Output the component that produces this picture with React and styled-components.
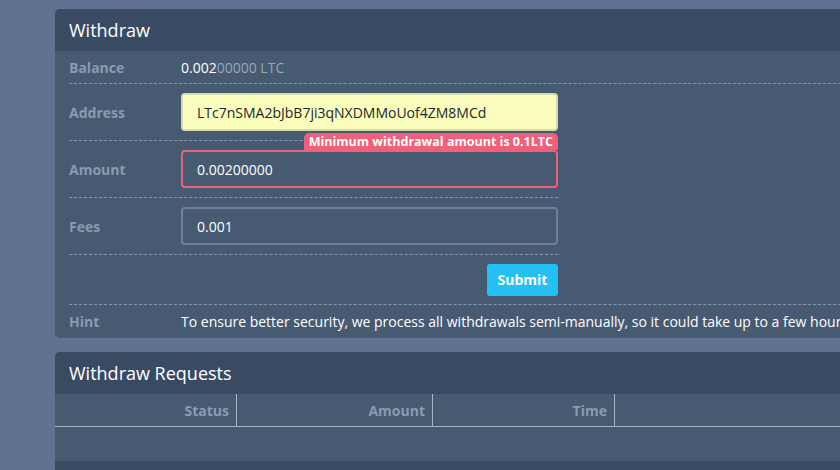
import styled, { createGlobalStyle } from "styled-components"

const Global = createGlobalStyle`
  html, body {
    margin: 0;
    background: #5f7390;
    overflow: hidden;
  }
  body {
    font-family: "Open Sans", "Liberation Sans", sans-serif;
  }
`

const Page = styled.div`
  padding: 9px 0 0 55px;
  display: flex;
  flex-direction: column;
  gap: 14px;
`

const Panel = styled.section`
  width: 900px;
  background: #465a72;
  border-radius: 5px 0 0 5px;
  overflow: hidden;
`

const PanelHead = styled.header`
  height: 42px;
  display: flex;
  align-items: center;
  padding-left: 14px;
  background: #394b63;
  color: #fff;
  font-size: 18px;
`

const PanelBody = styled.div`
  padding: 0 14px;
`

const Row = styled.div`
  display: flex;
  align-items: center;
  height: ${(p) => p.$h}px;
  width: ${(p) => (p.$narrow ? "489px" : "auto")};
  border-bottom: ${(p) => (p.$line ? "1px dashed #8797ad" : "none")};
`

const Label = styled.div`
  width: 112px;
  flex-shrink: 0;
  color: #8b9bb0;
  font-size: 14px;
  font-weight: 700;
`

const Value = styled.div`
  font-size: 14px;
  color: #fff;
  white-space: nowrap;
`

const Dim = styled.span`
  color: #97a6b9;
`

const Field = styled.div`
  position: relative;
  flex: 1;
`

const Input = styled.input`
  box-sizing: border-box;
  width: 100%;
  height: 38px;
  padding: 0 14px;
  border-radius: 4px;
  border: 2px solid ${(p) => (p.$error ? "#f0607a" : p.$filled ? "#d8dba6" : "#6e8199")};
  background: ${(p) => (p.$filled ? "#fafdbb" : "#465a72")};
  color: ${(p) => (p.$filled ? "#1e2630" : "#fff")};
  font-family: inherit;
  font-size: 14px;
  outline: none;
`

const Badge = styled.div`
  position: absolute;
  right: 0;
  bottom: 100%;
  height: 17px;
  padding: 0 5px;
  display: flex;
  align-items: center;
  background: #f0607a;
  border-radius: 5px 5px 0 0;
  color: #fff;
  font-size: 12.5px;
  font-weight: 700;
  white-space: nowrap;
`

const Actions = styled.div`
  width: 489px;
  display: flex;
  justify-content: flex-end;
`

const Submit = styled.button`
  width: 71px;
  height: 32px;
  border: none;
  border-radius: 3px;
  background: #24bff3;
  color: #fff;
  font-family: inherit;
  font-size: 14px;
  font-weight: 700;
`

const Hint = styled.div`
  font-size: 14px;
  color: #fff;
  white-space: nowrap;
`

const Table = styled.div`
  display: grid;
  grid-template-columns: 182px 196px 182px 1fr;
`

const Th = styled.div`
  height: 32px;
  display: flex;
  align-items: center;
  justify-content: flex-end;
  padding-right: 7px;
  border-bottom: 1px solid #a9b4c2;
  border-right: ${(p) => (p.$last ? "none" : "1px solid #a9b4c2")};
  color: #8b9bb0;
  font-size: 14px;
  font-weight: 700;
`

const EmptyRow = styled.div`
  grid-column: 1 / -1;
  height: 34px;
`

const Footer = styled.div`
  height: 30px;
  background: #394b63;
`

export default function App() {
  return (
    <>
      <Global />
      <Page>
        <Panel>
          <PanelHead>Withdraw</PanelHead>
          <PanelBody>
            <Row $h={32} $line>
              <Label>Balance</Label>
              <Value>
                0.002<Dim>00000 LTC</Dim>
              </Value>
            </Row>
            <Row $h={56} $line $narrow>
              <Label>Address</Label>
              <Field>
                <Input $filled defaultValue="LTc7nSMA2bJbB7ji3qNXDMMoUof4ZM8MCd" />
              </Field>
            </Row>
            <Row $h={56} $line $narrow>
              <Label>Amount</Label>
              <Field>
                <Badge>Minimum withdrawal amount is 0.1LTC</Badge>
                <Input $error defaultValue="0.00200000" />
              </Field>
            </Row>
            <Row $h={56} $line $narrow>
              <Label>Fees</Label>
              <Field>
                <Input defaultValue="0.001" />
              </Field>
            </Row>
            <Row $h={49} $line>
              <Actions>
                <Submit>Submit</Submit>
              </Actions>
            </Row>
            <Row $h={33}>
              <Label>Hint</Label>
              <Hint>
                To ensure better security, we process all withdrawals semi-manually, so it could take up to a few hours
              </Hint>
            </Row>
          </PanelBody>
        </Panel>
        <Panel>
          <PanelHead>Withdraw Requests</PanelHead>
          <Table>
            <Th>Status</Th>
            <Th>Amount</Th>
            <Th>Time</Th>
            <Th $last />
            <EmptyRow />
          </Table>
          <Footer />
        </Panel>
      </Page>
    </>
  )
}
